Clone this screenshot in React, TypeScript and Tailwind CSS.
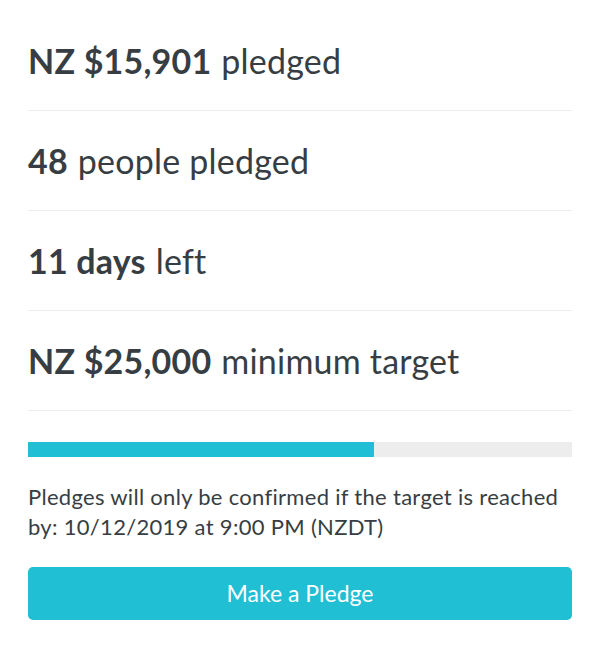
import React from "react";

const rows: { b: string; r: string }[] = [
  { b: "NZ $15,901", r: "pledged" },
  { b: "48", r: "people pledged" },
  { b: "11 days", r: "left" },
  { b: "NZ $25,000", r: "minimum target" },
];

export default function App() {
  return (
    <div
      className="w-[600px] h-[650px] bg-white px-[28px] pt-[11px] text-[#373e43]"
      style={{ fontFamily: "Lato, 'Liberation Sans', sans-serif" }}
    >
      {rows.map((row) => (
        <div
          key={row.b}
          className="h-[100px] flex items-center border-b border-[#ececec] text-[34px] leading-none tracking-[0.2px]"
        >
          <span className="font-bold">{row.b}</span>
          <span className="ml-[10px]">{row.r}</span>
        </div>
      ))}
      <div className="mt-[31px] h-[15px] w-full bg-[#ededed] flex">
        <div className="h-full bg-[#21bfd4]" style={{ width: `${(15901 / 25000) * 100}%` }} />
      </div>
      <p className="mt-[25px] text-[22px] leading-[30px] tracking-[0.3px]">
        Pledges will only be confirmed if the target is reached by: 10/12/2019 at 9:00 PM (NZDT)
      </p>
      <button className="mt-[25px] w-full h-[53px] rounded-[5px] bg-[#21bfd4] text-white text-[23px]">
        Make a Pledge
      </button>
    </div>
  );
}
